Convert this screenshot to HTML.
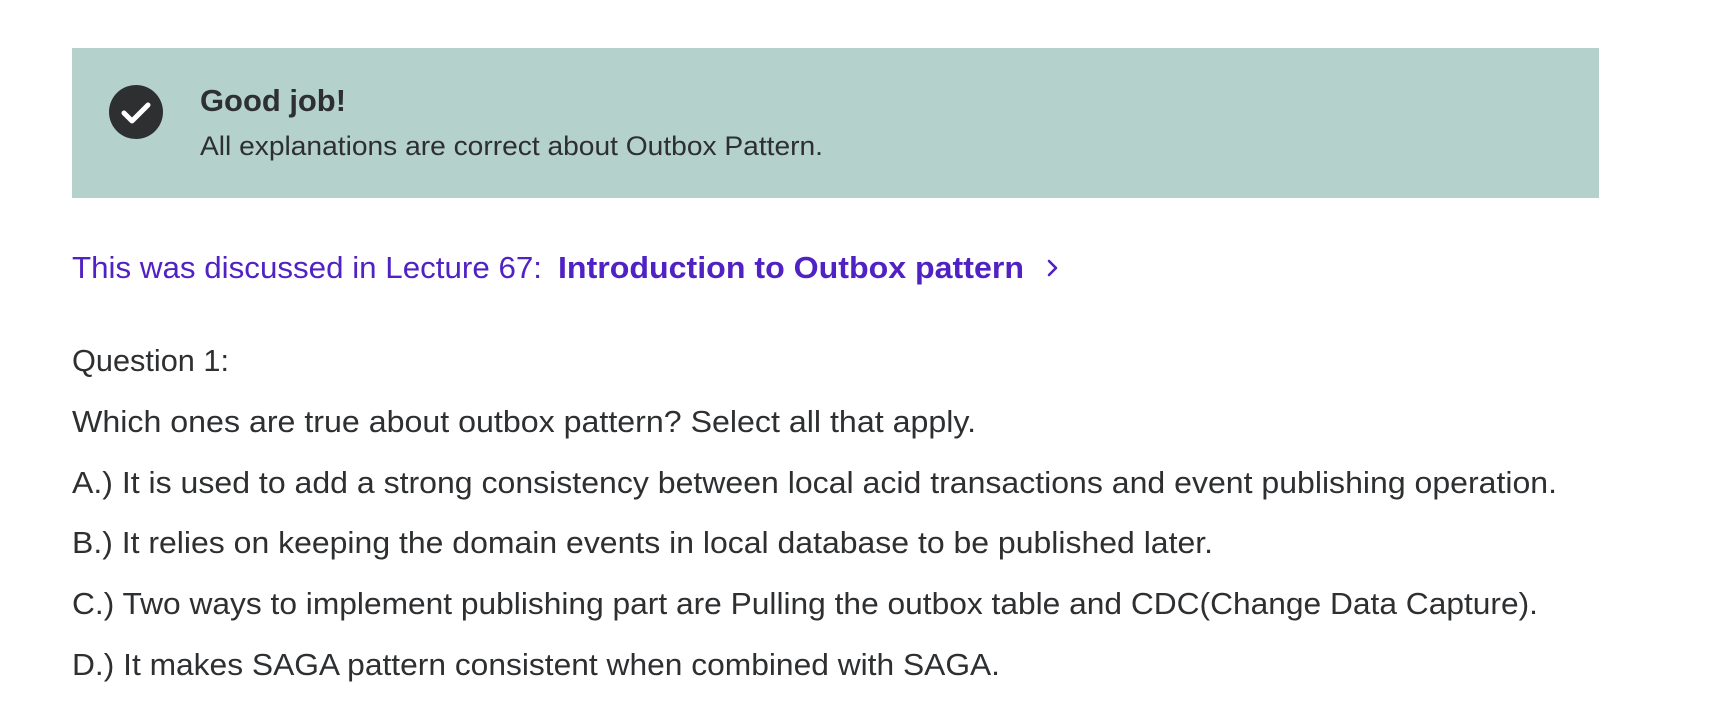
<!DOCTYPE html>
<html><head><meta charset="utf-8"><style>
html,body{margin:0;padding:0;background:#fff;width:1732px;height:708px;overflow:hidden}
svg{display:block}
text{font-family:"Liberation Sans",sans-serif}
</style></head><body>
<svg width="1732" height="708" viewBox="0 0 1732 708" xmlns="http://www.w3.org/2000/svg">
<rect x="72" y="48" width="1527" height="150" fill="#b4d1cc"/>
<circle cx="136" cy="112" r="27" fill="#2d2f31"/>
<path d="M124 113 L132 121 L148 105" stroke="#fff" stroke-width="5" fill="none" stroke-linecap="round" stroke-linejoin="round"/>
<text x="200" y="111" font-size="31" font-weight="bold" fill="#2d2f31" textLength="146" lengthAdjust="spacingAndGlyphs">Good job!</text>
<text x="200" y="155" font-size="27" fill="#2d2f31" textLength="623" lengthAdjust="spacingAndGlyphs">All explanations are correct about Outbox Pattern.</text>
<text x="72" y="278" font-size="31" fill="#5022c3" textLength="470" lengthAdjust="spacingAndGlyphs">This was discussed in Lecture 67:</text>
<text x="558" y="278" font-size="31" font-weight="bold" fill="#5022c3" textLength="466" lengthAdjust="spacingAndGlyphs">Introduction to Outbox pattern</text>
<path d="M1049 261 L1056 268 L1049 275" stroke="#5022c3" stroke-width="2.6" fill="none" stroke-linecap="round" stroke-linejoin="round"/>
<g font-size="31" fill="#2d2f31">
<text x="72" y="371" textLength="157" lengthAdjust="spacingAndGlyphs">Question 1:</text>
<text x="72" y="432" textLength="904" lengthAdjust="spacingAndGlyphs">Which ones are true about outbox pattern? Select all that apply.</text>
<text x="72" y="493" textLength="1485" lengthAdjust="spacingAndGlyphs">A.) It is used to add a strong consistency between local acid transactions and event publishing operation.</text>
<text x="72" y="553" textLength="1141" lengthAdjust="spacingAndGlyphs">B.) It relies on keeping the domain events in local database to be published later.</text>
<text x="72" y="614" textLength="1466" lengthAdjust="spacingAndGlyphs">C.) Two ways to implement publishing part are Pulling the outbox table and CDC(Change Data Capture).</text>
<text x="72" y="675" textLength="928" lengthAdjust="spacingAndGlyphs">D.) It makes SAGA pattern consistent when combined with SAGA.</text>
</g>
</svg>
</body></html>
